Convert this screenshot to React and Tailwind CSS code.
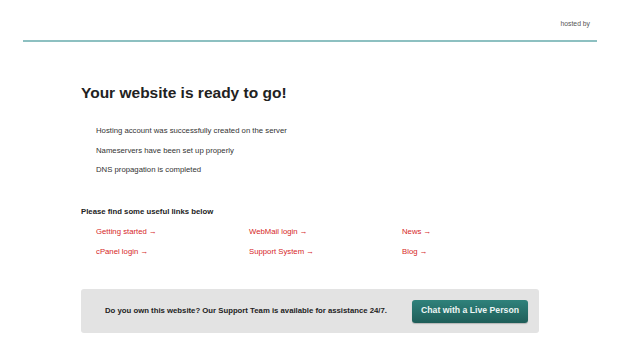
import React from 'react';

const links = [
  ['Getting started', 'WebMail login', 'News'],
  ['cPanel login', 'Support System', 'Blog'],
];

const App = () => {
  return (
    <div className="min-h-[343px] bg-white font-['Liberation_Sans',Arial,sans-serif]">
      {/* Header */}
      <div className="mx-[23px] pt-[19px] border-b-2 border-[#8dc0c1] h-[42px] flex justify-end">
        <span className="text-[6.8px] text-[#555] pr-[7px] leading-[10px]">hosted by</span>
      </div>

      <div className="w-[458px] mx-auto">
        <h1 className="mt-[40px] text-[15.5px] font-bold text-[#222] leading-[22px]">Your website is ready to go!</h1>

        <ul className="mt-[22px] pl-[15px] text-[7.75px] text-[#333] flex flex-col gap-[9.5px] leading-[10px]">
          <li>Hosting account was successfully created on the server</li>
          <li>Nameservers have been set up properly</li>
          <li>DNS propagation is completed</li>
        </ul>

        <p className="mt-[32px] text-[7.75px] font-bold text-[#222] leading-[10px]">Please find some useful links below</p>

        <div className="mt-[10px] pl-[15px] flex flex-col gap-[10px]">
          {links.map((row, i) => (
            <div key={i} className="grid grid-cols-[153px_153px_153px] text-[7.75px] leading-[10px] text-[#d61f1f]">
              {row.map((l) => (
                <a key={l} href="#">{l} &rarr;</a>
              ))}
            </div>
          ))}
        </div>

        <div className="mt-[32px] h-[44px] bg-[#e3e3e3] rounded-[3px] flex items-center justify-between pl-[24px] pr-[11px]">
          <span className="text-[7.75px] font-bold text-[#222]">Do you own this website? Our Support Team is available for assistance 24/7.</span>
          <button className="h-[23px] w-[116px] rounded-[3px] bg-gradient-to-b from-[#2f827b] to-[#1f5e59] text-[#eef6f5] text-[8.7px] font-bold shadow-[0_1px_1px_rgba(0,0,0,0.2)]">
            Chat with a Live Person
          </button>
        </div>
      </div>
    </div>
  );
};

export default App;
